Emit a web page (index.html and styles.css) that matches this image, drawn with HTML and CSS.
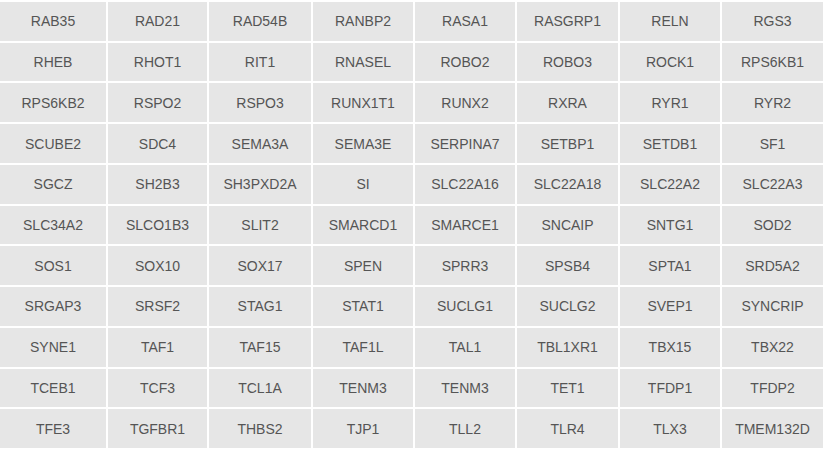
FILE: index.html
```html
<!DOCTYPE html>
<html>
<head>
<meta charset="utf-8">
<link rel="stylesheet" href="styles.css">
</head>
<body>
<div class="grid">
<div class="cell">RAB35</div><div class="cell">RAD21</div><div class="cell">RAD54B</div><div class="cell">RANBP2</div><div class="cell">RASA1</div><div class="cell">RASGRP1</div><div class="cell">RELN</div><div class="cell">RGS3</div>
<div class="cell">RHEB</div><div class="cell">RHOT1</div><div class="cell">RIT1</div><div class="cell">RNASEL</div><div class="cell">ROBO2</div><div class="cell">ROBO3</div><div class="cell">ROCK1</div><div class="cell">RPS6KB1</div>
<div class="cell">RPS6KB2</div><div class="cell">RSPO2</div><div class="cell">RSPO3</div><div class="cell">RUNX1T1</div><div class="cell">RUNX2</div><div class="cell">RXRA</div><div class="cell">RYR1</div><div class="cell">RYR2</div>
<div class="cell">SCUBE2</div><div class="cell">SDC4</div><div class="cell">SEMA3A</div><div class="cell">SEMA3E</div><div class="cell">SERPINA7</div><div class="cell">SETBP1</div><div class="cell">SETDB1</div><div class="cell">SF1</div>
<div class="cell">SGCZ</div><div class="cell">SH2B3</div><div class="cell">SH3PXD2A</div><div class="cell">SI</div><div class="cell">SLC22A16</div><div class="cell">SLC22A18</div><div class="cell">SLC22A2</div><div class="cell">SLC22A3</div>
<div class="cell">SLC34A2</div><div class="cell">SLCO1B3</div><div class="cell">SLIT2</div><div class="cell">SMARCD1</div><div class="cell">SMARCE1</div><div class="cell">SNCAIP</div><div class="cell">SNTG1</div><div class="cell">SOD2</div>
<div class="cell">SOS1</div><div class="cell">SOX10</div><div class="cell">SOX17</div><div class="cell">SPEN</div><div class="cell">SPRR3</div><div class="cell">SPSB4</div><div class="cell">SPTA1</div><div class="cell">SRD5A2</div>
<div class="cell">SRGAP3</div><div class="cell">SRSF2</div><div class="cell">STAG1</div><div class="cell">STAT1</div><div class="cell">SUCLG1</div><div class="cell">SUCLG2</div><div class="cell">SVEP1</div><div class="cell">SYNCRIP</div>
<div class="cell">SYNE1</div><div class="cell">TAF1</div><div class="cell">TAF15</div><div class="cell">TAF1L</div><div class="cell">TAL1</div><div class="cell">TBL1XR1</div><div class="cell">TBX15</div><div class="cell">TBX22</div>
<div class="cell">TCEB1</div><div class="cell">TCF3</div><div class="cell">TCL1A</div><div class="cell">TENM3</div><div class="cell">TENM3</div><div class="cell">TET1</div><div class="cell">TFDP1</div><div class="cell">TFDP2</div>
<div class="cell">TFE3</div><div class="cell">TGFBR1</div><div class="cell">THBS2</div><div class="cell">TJP1</div><div class="cell">TLL2</div><div class="cell">TLR4</div><div class="cell">TLX3</div><div class="cell">TMEM132D</div>
</div>
</body>
</html>
```

FILE: styles.css
```css
html, body {
  margin: 0;
  padding: 0;
  background: #ffffff;
}
body {
  padding-top: 2px;
  font-family: "Liberation Sans", Arial, sans-serif;
}
.grid {
  display: grid;
  width: 823px;
  height: 446px;
  grid-template-columns: 106px 99px 102px 100px 100px 101px 100px 101px;
  grid-template-rows: repeat(11, 1fr);
  gap: 2px;
}
.cell {
  background: #e6e6e6;
  color: #555555;
  font-size: 14px;
  display: flex;
  align-items: center;
  justify-content: center;
  white-space: nowrap;
}
```
